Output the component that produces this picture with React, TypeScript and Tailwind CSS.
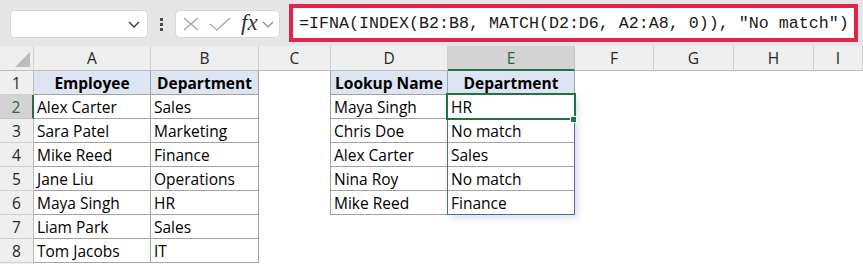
import React from "react";

const colLetters = ["A", "B", "C", "D", "E", "F", "G", "H", "I"];

const colA = ["Employee", "Alex Carter", "Sara Patel", "Mike Reed", "Jane Liu", "Maya Singh", "Liam Park", "Tom Jacobs"];
const colB = ["Department", "Sales", "Marketing", "Finance", "Operations", "HR", "Sales", "IT"];
const colD = ["Lookup Name", "Maya Singh", "Chris Doe", "Alex Carter", "Nina Roy", "Mike Reed"];
const colE = ["Department", "HR", "No match", "Sales", "No match", "Finance"];

function cellValue(col: number, row: number): string {
  if (col === 0) return colA[row - 1] ?? "";
  if (col === 1) return colB[row - 1] ?? "";
  if (col === 3) return colD[row - 1] ?? "";
  if (col === 4) return colE[row - 1] ?? "";
  return "";
}

function inTable(col: number, row: number) {
  if ((col === 0 || col === 1) && row >= 1 && row <= 8) return true;
  if ((col === 3 || col === 4) && row >= 1 && row <= 6) return true;
  return false;
}

function Cell({ col, row }: { col: number; row: number }) {
  const text = cellValue(col, row);
  const table = inTable(col, row);
  const isHead = table && row === 1;
  let cls = "h-[24px] flex items-center px-[3px] pt-[2px] whitespace-nowrap overflow-hidden";
  if (table) cls += " border-r border-b border-[#a3a3a3]";
  else if (col === 2 && row <= 6) cls += " border-r border-[#a3a3a3]";
  if (isHead) cls += " bg-[#dce5f1] justify-center font-bold";
  return <div className={cls}>{text}</div>;
}

export default function App() {
  const rows = [1, 2, 3, 4, 5, 6, 7, 8];
  return (
    <div
      className="w-[863px] h-[264px] overflow-hidden bg-white text-black"
      style={{ fontFamily: '"Open Sans", "Noto Sans", sans-serif' }}
    >
      {/* Formula bar */}
      <div className="h-[46px] bg-[#e6e6e6] flex items-start">
        <div className="ml-[10px] mt-[10px] w-[138px] h-[28px] bg-white rounded-[5px] border border-[#d9d9d9] flex items-center justify-end pr-[7px]">
          <svg width="12" height="7" viewBox="0 0 12 7">
            <polyline points="1,1 6,6 11,1" fill="none" stroke="#3a3a3a" strokeWidth="1.4" />
          </svg>
        </div>
        <div className="ml-[12px] mt-[18px] flex flex-col gap-[2px]">
          <div className="w-[3px] h-[3px] bg-[#4a4a4a]" />
          <div className="w-[3px] h-[3px] bg-[#4a4a4a]" />
          <div className="w-[3px] h-[3px] bg-[#4a4a4a]" />
        </div>
        <div className="ml-[12px] mt-[10px] w-[105px] h-[28px] bg-white rounded-[5px] border border-[#d9d9d9] flex items-center pl-[7px]">
          <svg width="16" height="14" viewBox="0 0 16 14">
            <path d="M1 1 L15 13 M15 1 L1 13" stroke="#a6a6a6" strokeWidth="1.3" fill="none" />
          </svg>
          <svg width="22" height="14" viewBox="0 0 22 14" className="ml-[10px]">
            <polyline points="1,7 8,13 21,1" stroke="#a6a6a6" strokeWidth="1.3" fill="none" />
          </svg>
          <span
            className="ml-[10px] text-[23px] italic leading-none text-[#333] -mt-[3px]"
            style={{ fontFamily: '"Liberation Serif", serif' }}
          >
            fx
          </span>
          <svg width="12" height="7" viewBox="0 0 12 7" className="ml-[4px]">
            <polyline points="1,1 6,6 11,1" fill="none" stroke="#8a8a8a" strokeWidth="1.2" />
          </svg>
        </div>
        <div className="ml-[9px] mt-[4px] w-[569px] h-[38px] bg-white border-4 border-[#e2234d] flex items-center pl-[6px]">
          <span
            className="text-[16.67px] text-[#1a1a1a] whitespace-nowrap"
            style={{ fontFamily: '"Liberation Mono", monospace' }}
          >
            =IFNA(INDEX(B2:B8, MATCH(D2:D6, A2:A8, 0)), "No match")
          </span>
        </div>
      </div>

      {/* Sheet grid */}
      <div className="relative text-[15.5px]">
        <div className="grid grid-cols-[34px_117px_108px_72px_117px_127px_79px_80px_80px_1fr]">
          <div className="h-[25px] bg-[#efefef] border-r border-b border-r-[#d0d0d0] border-b-[#bdbdbd] flex items-end justify-end pr-[3px] pb-[3px]">
            <svg width="15" height="15" viewBox="0 0 15 15">
              <polygon points="15,0 15,15 0,15" fill="#bcbcbc" />
            </svg>
          </div>
          {colLetters.map((l) =>
            l === "E" ? (
              <div
                key={l}
                className="h-[25px] pt-[2px] bg-[#d3d3d3] border-r border-r-[#c4c4c4] border-b-2 border-b-[#217346] flex items-center justify-center text-[#1d6b3f]"
              >
                {l}
              </div>
            ) : (
              <div
                key={l}
                className="h-[25px] pt-[2px] bg-[#efefef] border-r border-b border-r-[#d0d0d0] border-b-[#bdbdbd] flex items-center justify-center text-[#262626]"
              >
                {l}
              </div>
            )
          )}
          {rows.map((r) => (
            <React.Fragment key={r}>
              {r === 2 ? (
                <div className="h-[24px] pt-[2px] bg-[#d3d3d3] border-r-2 border-r-[#217346] border-b border-b-[#c4c4c4] flex items-center justify-center text-[#1d6b3f]">
                  {r}
                </div>
              ) : (
                <div className="h-[24px] pt-[2px] bg-[#efefef] border-r border-b border-r-[#bdbdbd] border-b-[#d0d0d0] flex items-center justify-center text-[#262626]">
                  {r}
                </div>
              )}
              {colLetters.map((_, c) => (
                <Cell key={c} col={c} row={r} />
              ))}
            </React.Fragment>
          ))}
          {/* partial row 9 */}
          <div className="h-[24px] bg-[#efefef] border-r border-r-[#bdbdbd]" />
        </div>

        {/* Range highlight E2:E6 */}
        <div className="absolute left-[447px] top-[48px] w-[128px] h-[121px] border border-[#3a6cc0] shadow-[3px_3px_6px_rgba(0,0,0,0.12)] pointer-events-none" />
        {/* Active cell E2 */}
        <div className="absolute left-[446px] top-[47px] w-[130px] h-[27px] border-2 border-[#217346] pointer-events-none" />
        <div className="absolute left-[570px] top-[70px] w-[7px] h-[7px] bg-[#217346] border border-white pointer-events-none" />
      </div>
    </div>
  );
}
